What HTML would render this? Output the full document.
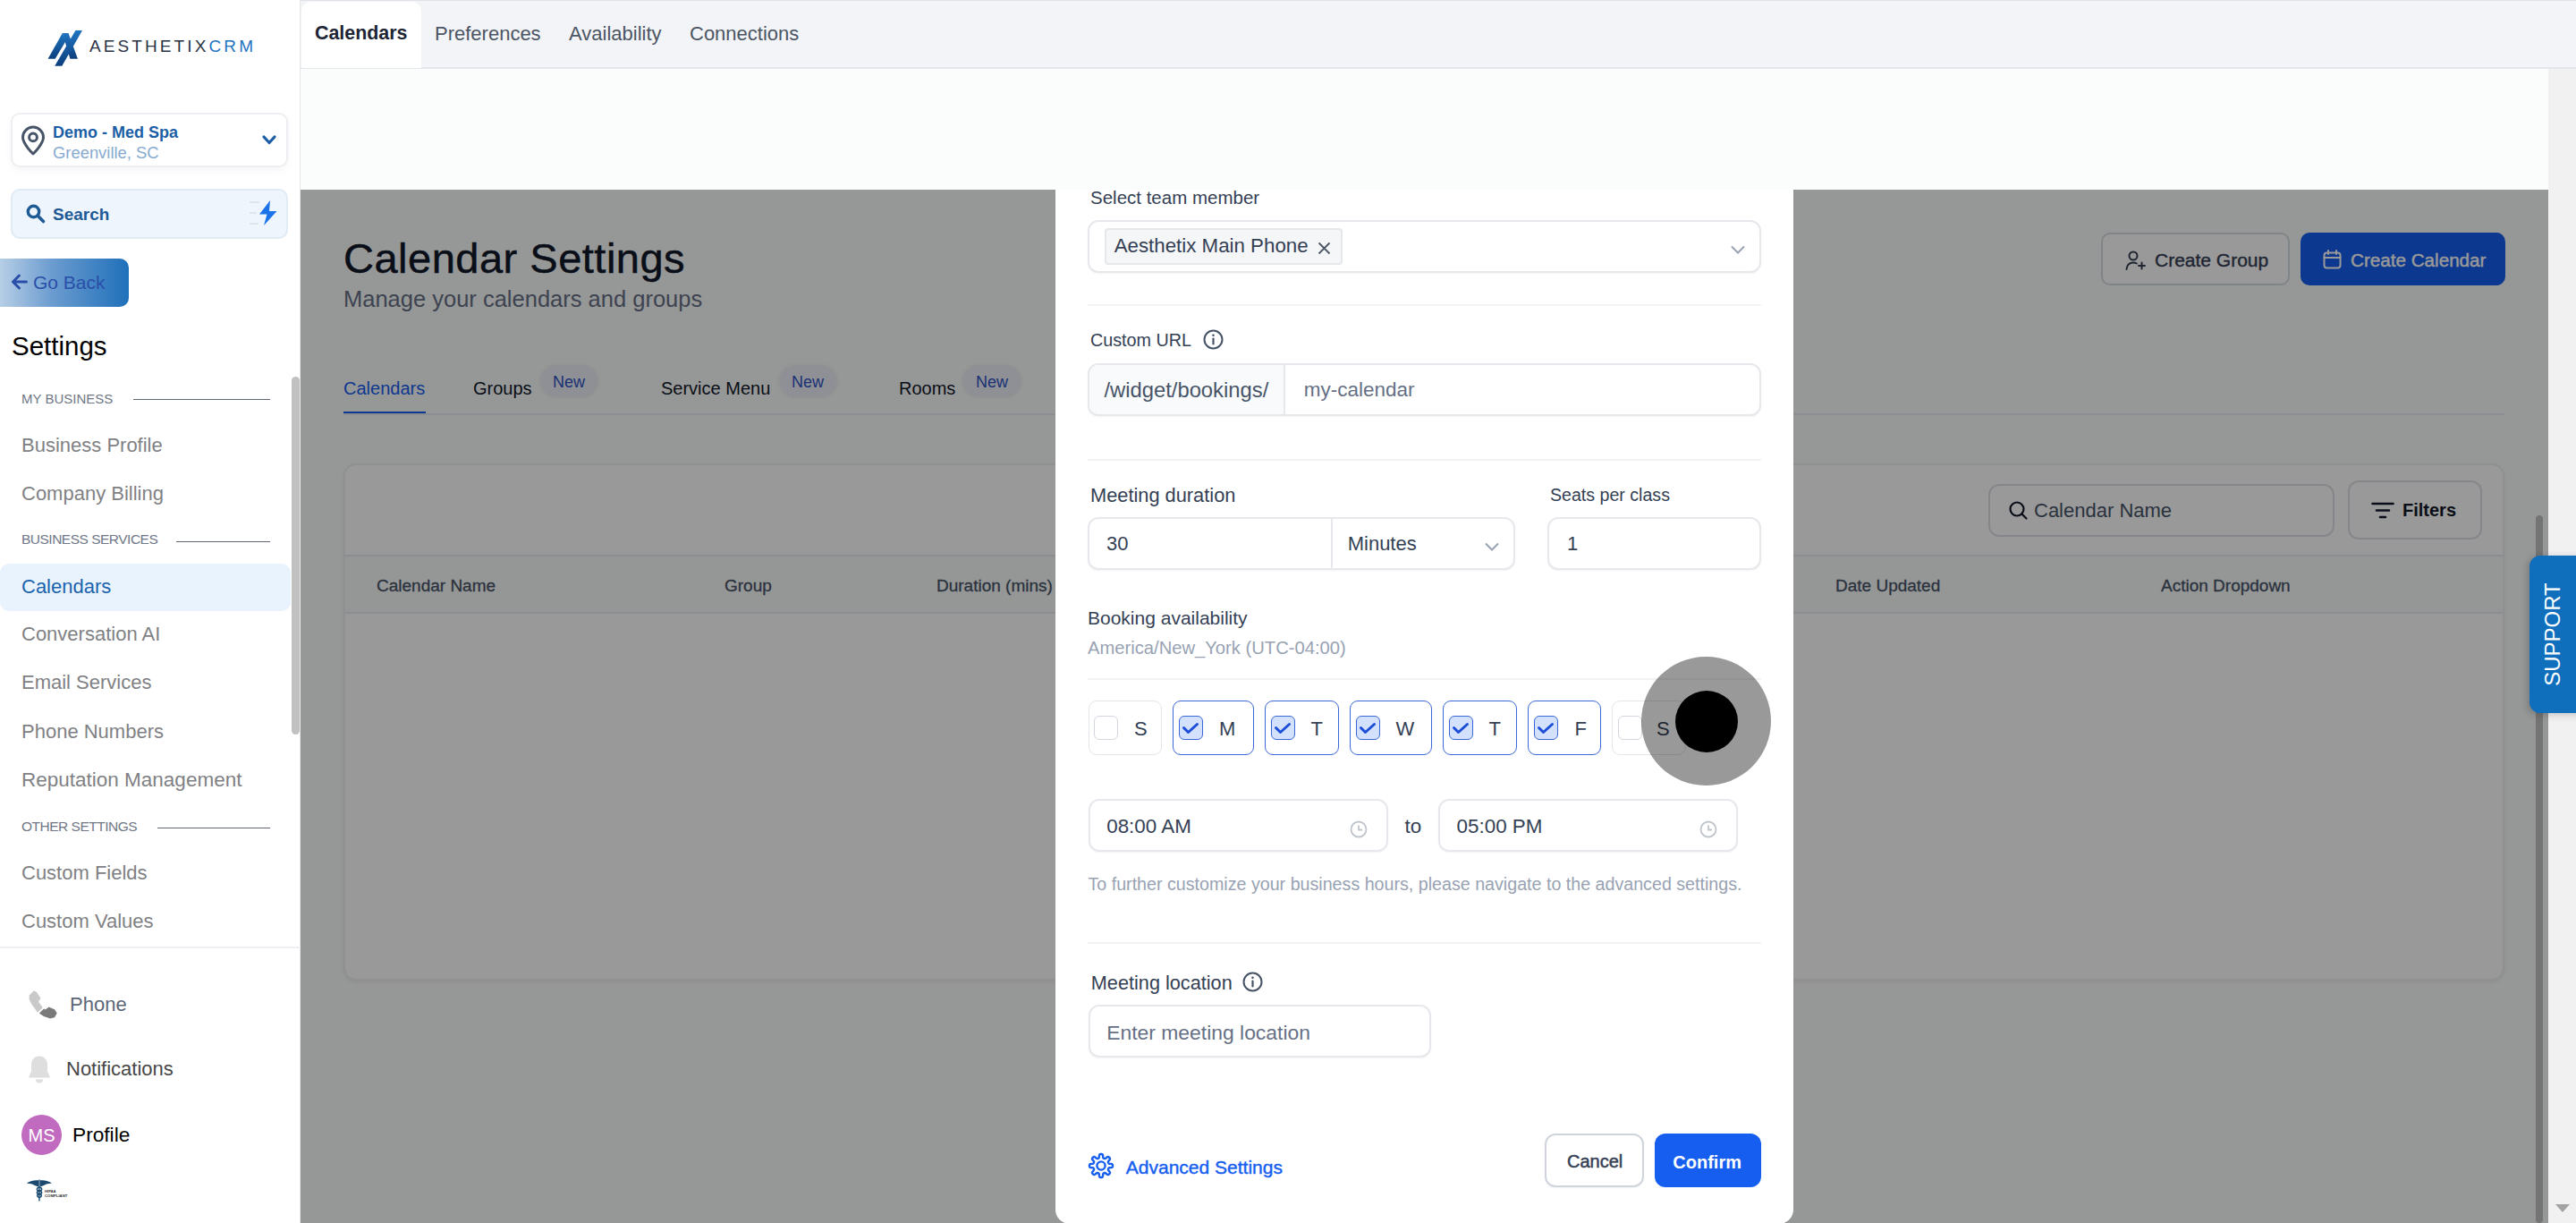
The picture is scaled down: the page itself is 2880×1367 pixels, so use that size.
<!DOCTYPE html>
<html><head><meta charset="utf-8">
<style>
*{box-sizing:border-box;margin:0;padding:0}
html,body{width:2880px;height:1367px;overflow:hidden;background:#fbfcfc;font-family:"Liberation Sans",sans-serif}
.a{position:absolute}
.t{position:absolute;line-height:1;white-space:nowrap}
svg{position:absolute;overflow:visible}
</style></head><body>

<!-- ===== MAIN PAGE (under overlay) ===== -->
<div class="a" style="left:336px;top:77px;width:2513px;height:1290px;background:#fbfcfc"></div>

<!-- page title -->
<div class="t" style="left:384px;top:264.8px;font-size:47px;letter-spacing:0.5px;color:#101828;-webkit-text-stroke:0.5px #101828">Calendar Settings</div>
<div class="t" style="left:384px;top:322px;font-size:25.5px;color:#667085">Manage your calendars and groups</div>

<!-- buttons -->
<div class="a" style="left:2349px;top:260px;width:211px;height:59px;border:2px solid #d8dce2;border-radius:10px;background:#fff"></div>
<svg style="left:2376px;top:280px" width="24" height="22" viewBox="0 0 24 22"><circle cx="9" cy="6" r="4.5" fill="none" stroke="#344054" stroke-width="2"/><path d="M1.5 21c0-4.5 3.3-7.5 7.5-7.5 1.5 0 2.8.4 3.8 1" fill="none" stroke="#344054" stroke-width="2" stroke-linecap="round"/><path d="M18.5 13.5v7M15 17h7" stroke="#344054" stroke-width="2" stroke-linecap="round"/></svg>
<div class="t" style="left:2409px;top:279.5px;font-size:21px;color:#344054;-webkit-text-stroke:0.4px #344054">Create Group</div>

<div class="a" style="left:2572px;top:260px;width:229px;height:59px;border-radius:10px;background:#155eef"></div>
<svg style="left:2597px;top:279px" width="22" height="22" viewBox="0 0 22 22"><rect x="1.5" y="3.5" width="18" height="17" rx="3" fill="none" stroke="#fff" stroke-width="2"/><path d="M1.5 9h18M6 1v4M15 1v4" stroke="#fff" stroke-width="2" stroke-linecap="round"/></svg>
<div class="t" style="left:2628px;top:280.5px;font-size:20.65px;color:#fff;-webkit-text-stroke:0.4px #fff">Create Calendar</div>

<!-- tabs -->
<div class="t" style="left:384px;top:423.5px;font-size:20px;color:#155eef">Calendars</div>
<div class="a" style="left:384px;top:460px;width:92px;height:4px;background:#155eef"></div>
<div class="a" style="left:384px;top:462px;width:2416px;height:2px;background:#eaecf0"></div>
<div class="t" style="left:529px;top:423.5px;font-size:20px;color:#101828">Groups</div>
<div class="a" style="left:605px;top:409px;width:63px;height:34px;border-radius:17px;background:#eef1f8;box-shadow:0 0 5px rgba(16,24,40,0.10)"></div>
<div class="t" style="left:618px;top:418px;font-size:18px;color:#2d52c4">New</div>
<div class="t" style="left:739px;top:423.5px;font-size:20px;color:#101828">Service Menu</div>
<div class="a" style="left:872px;top:409px;width:63px;height:34px;border-radius:17px;background:#eef1f8;box-shadow:0 0 5px rgba(16,24,40,0.10)"></div>
<div class="t" style="left:885px;top:418px;font-size:18px;color:#2d52c4">New</div>
<div class="t" style="left:1005px;top:423.5px;font-size:20px;color:#101828">Rooms</div>
<div class="a" style="left:1077px;top:409px;width:64px;height:34px;border-radius:17px;background:#eef1f8;box-shadow:0 0 5px rgba(16,24,40,0.10)"></div>
<div class="t" style="left:1091px;top:418px;font-size:18px;color:#2d52c4">New</div>

<!-- card -->
<div class="a" style="left:384px;top:518px;width:2416px;height:578px;border:2px solid #eef0f3;border-radius:14px;background:#fff;box-shadow:0 2px 4px rgba(16,24,40,0.06)"></div>
<div class="a" style="left:386px;top:620px;width:2412px;height:66px;background:#f9fafb;border-top:2px solid #eaecf0;border-bottom:2px solid #eaecf0"></div>
<div class="t" style="left:421px;top:644.5px;font-size:19px;color:#475467;-webkit-text-stroke:0.3px #475467">Calendar Name</div>
<div class="t" style="left:810px;top:644.5px;font-size:19px;color:#475467;-webkit-text-stroke:0.3px #475467">Group</div>
<div class="t" style="left:1047px;top:644.5px;font-size:19px;color:#475467;-webkit-text-stroke:0.3px #475467">Duration (mins)</div>
<div class="t" style="left:2052px;top:644.5px;font-size:19px;color:#475467;-webkit-text-stroke:0.3px #475467">Date Updated</div>
<div class="t" style="left:2416px;top:644.5px;font-size:19px;color:#475467;-webkit-text-stroke:0.3px #475467">Action Dropdown</div>

<div class="a" style="left:2223px;top:541px;width:387px;height:59px;border:2px solid #dde0e5;border-radius:12px;background:#fff"></div>
<svg style="left:2246px;top:560px" width="21" height="21" viewBox="0 0 21 21"><circle cx="9" cy="9" r="7.5" fill="none" stroke="#101828" stroke-width="2.2"/><path d="M14.5 14.5L19.5 19.5" stroke="#101828" stroke-width="2.2" stroke-linecap="round"/></svg>
<div class="t" style="left:2274px;top:559.8px;font-size:22px;color:#475467">Calendar Name</div>

<div class="a" style="left:2625px;top:537px;width:150px;height:66px;border:2px solid #dde0e5;border-radius:12px;background:#fff"></div>
<svg style="left:2651px;top:561px" width="26" height="19" viewBox="0 0 26 19"><path d="M1.5 2h23M6 9.5h14M10 17h6" stroke="#101828" stroke-width="2.6" stroke-linecap="round"/></svg>
<div class="t" style="left:2686px;top:559.5px;font-size:20px;font-weight:bold;color:#101828">Filters</div>

<!-- inner scrollbar -->
<div class="a" style="left:2835px;top:576px;width:8px;height:791px;border-radius:4px;background:#c1c1c1"></div>

<!-- OVERLAY -->
<div class="a" style="left:336px;top:212px;width:2513px;height:1155px;background:rgba(0,0,0,0.4)"></div>

<!-- ===== TOP NAV ===== -->
<div class="a" style="left:336px;top:0;width:2544px;height:77px;background:#f3f4f8;border-top:1px solid #dfe1e6;border-bottom:2px solid #e4e6eb"></div>
<div class="a" style="left:337px;top:2px;width:134px;height:74px;background:#fff;border-radius:10px 10px 0 0"></div>
<div class="t" style="left:352px;top:27.3px;font-size:21.4px;font-weight:bold;color:#1d2433">Calendars</div>
<div class="t" style="left:486px;top:27.3px;font-size:22px;color:#4b5563">Preferences</div>
<div class="t" style="left:636px;top:27.3px;font-size:22px;color:#4b5563">Availability</div>
<div class="t" style="left:771px;top:27.3px;font-size:22px;color:#4b5563">Connections</div>

<!-- page scrollbar track -->
<div class="a" style="left:2849px;top:77px;width:31px;height:1290px;background:#f1f1f1"></div>
<svg style="left:2857px;top:1346px" width="16" height="10" viewBox="0 0 16 10"><path d="M0 0h16L8 9z" fill="#a3a3a3"/></svg>

<!-- SUPPORT tab -->
<div class="a" style="left:2828px;top:621px;width:60px;height:176px;background:#0f6fbd;border-radius:12px 0 0 12px;box-shadow:-2px 2px 8px rgba(0,0,0,0.2)"></div>
<div class="t" style="left:2854px;top:709px;font-size:24px;color:#fff;transform:translate(-50%,-50%) rotate(-90deg);transform-origin:center">SUPPORT</div>

<!-- ===== SIDEBAR ===== -->
<div class="a" style="left:0;top:0;width:336px;height:1367px;background:#fff;border-right:1px solid #e5e7eb"></div>

<!-- logo -->
<svg style="left:50px;top:30px" width="46" height="48" viewBox="50 30 46 48">
<defs><linearGradient id="lg" x1="0" y1="0" x2="0" y2="1"><stop offset="0" stop-color="#1f74c0"/><stop offset="1" stop-color="#0c3f7e"/></linearGradient></defs>
<polygon points="53.6,65.7 61.7,65.7 73.5,46 69.8,37.1" fill="url(#lg)"/>
<polygon points="69.8,37.1 78.4,65.7 86.9,65.7 76.5,37.1" fill="url(#lg)"/>
<polygon points="61.2,73.7 69.3,73.7 92,34.1 84.4,34.1" fill="url(#lg)"/>
</svg>
<div class="t" style="left:100px;top:42px;font-size:19px;letter-spacing:3.1px;color:#2a3344">AESTHETIX<span style="color:#1f74c0">CRM</span></div>

<!-- location -->
<div class="a" style="left:12px;top:126px;width:310px;height:61px;border:2px solid #eceef1;border-radius:10px;background:#fff;box-shadow:0 4px 10px rgba(0,0,0,0.04)"></div>
<svg style="left:23px;top:140px" width="28" height="34" viewBox="0 0 28 34"><path d="M14 32C14 32 2.5 21 2.5 13.6A11.5 11.5 0 0 1 25.5 13.6C25.5 21 14 32 14 32Z" fill="none" stroke="#475467" stroke-width="3" stroke-linejoin="round"/><circle cx="14" cy="13.4" r="4.4" fill="none" stroke="#475467" stroke-width="3"/></svg>
<div class="t" style="left:59px;top:138.7px;font-size:18px;font-weight:bold;color:#1b5ea6">Demo - Med Spa</div>
<div class="t" style="left:59px;top:161.5px;font-size:18.4px;color:#86aad0">Greenville, SC</div>
<svg style="left:293px;top:151px" width="16" height="11" viewBox="0 0 16 11"><path d="M2 2L8 8.5 14 2" fill="none" stroke="#1b5ea6" stroke-width="3.2" stroke-linecap="round" stroke-linejoin="round"/></svg>

<!-- search -->
<div class="a" style="left:12px;top:211px;width:310px;height:56px;border:2px solid #e1ebf5;border-radius:10px;background:#eef5fc"></div>
<svg style="left:29px;top:228px" width="22" height="22" viewBox="0 0 22 22"><circle cx="8.5" cy="8.5" r="6.2" fill="none" stroke="#1e5a96" stroke-width="3.4"/><path d="M13.5 13.5L19.5 19.5" stroke="#1e5a96" stroke-width="3.6" stroke-linecap="round"/></svg>
<div class="t" style="left:59px;top:230px;font-size:19px;font-weight:bold;color:#1e5a96">Search</div>
<div class="a" style="left:279px;top:225px;width:11px;height:2px;background:#dde6ef"></div>
<div class="a" style="left:279px;top:237px;width:8px;height:2px;background:#dde6ef"></div>
<div class="a" style="left:279px;top:249px;width:10px;height:2px;background:#dde6ef"></div>
<svg style="left:289px;top:224px" width="22" height="28" viewBox="0 0 22 28"><path d="M13 0L1 15.5h8.5L6 28 20.5 12h-8.5z" fill="#1a73e8"/></svg>

<!-- go back -->
<div class="a" style="left:-10px;top:289px;width:154px;height:54px;border-radius:10px;background:linear-gradient(90deg,#c4d7ea 0%,#6a9bcf 45%,#1f70ba 100%)"></div>
<svg style="left:12px;top:306px" width="19" height="18" viewBox="0 0 19 18"><path d="M17.5 9H3M9.5 2L2.5 9l7 7" fill="none" stroke="#2a4fa8" stroke-width="3" stroke-linecap="round" stroke-linejoin="round"/></svg>
<div class="t" style="left:37px;top:305.2px;font-size:21px;color:#2a4fa8">Go Back</div>

<div class="t" style="left:13px;top:372px;font-size:29.5px;color:#000">Settings</div>

<!-- menu -->
<div class="t" style="left:24px;top:437.5px;font-size:15px;color:#6f7787">MY BUSINESS</div>
<div class="a" style="left:149px;top:446px;width:153px;height:1px;background:#5d6573"></div>
<div class="t" style="left:24px;top:486.6px;font-size:22px;color:#7f8184">Business Profile</div>
<div class="t" style="left:24px;top:540.8px;font-size:22px;color:#7f8184">Company Billing</div>
<div class="t" style="left:24px;top:595px;font-size:15.5px;letter-spacing:-0.5px;color:#6f7787">BUSINESS SERVICES</div>
<div class="a" style="left:197px;top:605px;width:105px;height:1px;background:#5d6573"></div>
<div class="a" style="left:0;top:630px;width:325px;height:53px;border-radius:10px;background:#e8f3fd"></div>
<div class="t" style="left:24px;top:644.5px;font-size:22px;color:#1b64ad">Calendars</div>
<div class="t" style="left:24px;top:698.4px;font-size:22px;color:#7f8184">Conversation AI</div>
<div class="t" style="left:24px;top:752.3px;font-size:22px;color:#7f8184">Email Services</div>
<div class="t" style="left:24px;top:806.8px;font-size:22px;color:#7f8184">Phone Numbers</div>
<div class="t" style="left:24px;top:861.1px;font-size:22.5px;color:#7f8184">Reputation Management</div>
<div class="t" style="left:24px;top:916px;font-size:15.5px;letter-spacing:-0.5px;color:#6f7787">OTHER SETTINGS</div>
<div class="a" style="left:176px;top:925px;width:126px;height:1px;background:#5d6573"></div>
<div class="t" style="left:24px;top:965.4px;font-size:22px;color:#7f8184">Custom Fields</div>
<div class="t" style="left:24px;top:1019.3px;font-size:22px;color:#7f8184">Custom Values</div>
<div class="a" style="left:326px;top:421px;width:9px;height:400px;border-radius:5px;background:#c1c1c1"></div>
<div class="a" style="left:0;top:1058px;width:336px;height:2px;background:#eceef1"></div>

<!-- bottom sidebar -->
<svg style="left:28px;top:1102px" width="42" height="40" viewBox="28 1102 42 40"><path d="M37.8 1108.1 L33.2 1112.8 L33.2 1116.7 L35.5 1121.6 L42.1 1130.8 L47 1126.2 L42.4 1119.8 L44.7 1115.7 L40.4 1109.2Z" fill="#c9c9c9" stroke="#c9c9c9" stroke-width="1.2" stroke-linejoin="round"/><path d="M44.7 1132.4 L49.3 1128.2 L50.6 1129.2 L54.8 1126.2 L60.7 1128.8 L63 1132.4 L60.7 1136.7 L55.8 1137.8 L49.3 1135.4Z" fill="#7a7a7a" stroke="#7a7a7a" stroke-width="1.2" stroke-linejoin="round"/></svg>
<div class="t" style="left:78px;top:1111.5px;font-size:22px;color:#5c6677">Phone</div>
<svg style="left:31px;top:1179px" width="26" height="32" viewBox="0 0 26 32"><path d="M13 1.5c-5.5 0-9 4-9 9.5v8L1.5 23.5v2h23v-2L22 19v-8c0-5.5-3.5-9.5-9-9.5z" fill="#dedede"/><path d="M9 27.5a4 4 0 0 0 8 0z" fill="#dedede"/></svg>
<div class="t" style="left:74px;top:1183.9px;font-size:22px;color:#474747">Notifications</div>
<div class="a" style="left:24px;top:1246px;width:45px;height:45px;border-radius:50%;background:#c06bc0"></div>
<div class="t" style="left:46.5px;top:1268.5px;font-size:20px;color:#fff;transform:translate(-50%,-50%)">MS</div>
<div class="t" style="left:81px;top:1257px;font-size:22.7px;color:#000">Profile</div>
<svg style="left:26px;top:1310px" width="56" height="40" viewBox="26 1310 56 40"><path d="M29.9 1322.2 C33 1320.5 38 1318.6 43 1319.3 L43 1326.5 C40 1325.8 37.5 1324.5 36 1323.6 C34 1323 31.5 1322.8 29.9 1322.2Z" fill="#1b4a6e"/><path d="M57.9 1322.2 C54.8 1320.5 49.8 1318.6 44.8 1319.3 L44.8 1326.5 C47.8 1325.8 50.3 1324.5 51.8 1323.6 C53.8 1323 56.3 1322.8 57.9 1322.2Z" fill="#1b4a6e"/><rect x="43.2" y="1318.5" width="1.5" height="24" fill="#2a5a80"/><path d="M44 1327 C40.5 1327.8 40.5 1330.6 44 1331 C47.5 1331.6 47.5 1334.2 44 1334.6 C40.8 1335.2 41 1337.6 44 1338.6" fill="none" stroke="#1b4a6e" stroke-width="1.5"/><path d="M44 1327 C47.5 1327.8 47.5 1330.6 44 1331 C40.5 1331.6 40.5 1334.2 44 1334.6 C47.2 1335.2 47 1337.6 44 1338.6" fill="none" stroke="#1b4a6e" stroke-width="1.5"/><text x="50" y="1333" font-family="Liberation Sans" font-weight="bold" font-size="3.8" fill="#333" textLength="12.6" lengthAdjust="spacingAndGlyphs">HIPAA</text><text x="50" y="1337.9" font-family="Liberation Sans" font-weight="bold" font-size="3.8" fill="#333" textLength="25.4" lengthAdjust="spacingAndGlyphs">COMPLIANT</text></svg>

<!-- ===== MODAL ===== -->
<div class="a" style="left:1180px;top:212px;width:825px;height:1156px;background:#fff;border-radius:0 0 16px 16px"></div>

<div class="t" style="left:1219px;top:211.4px;font-size:20.5px;color:#344054">Select team member</div>
<div class="a" style="left:1216px;top:245.5px;width:753px;height:59px;border:2px solid #e6e8ec;border-radius:12px;background:#fff;box-shadow:0 1px 2px rgba(16,24,40,0.05)"></div>
<div class="a" style="left:1234.5px;top:254.5px;width:266px;height:41px;border:2px solid #e6e8ec;border-radius:4px;background:#f5f6f8"></div>
<div class="t" style="left:1245.7px;top:263.9px;font-size:22.3px;color:#344054">Aesthetix Main Phone</div>
<svg style="left:1473px;top:270px" width="15" height="15" viewBox="0 0 15 15"><path d="M1.5 1.5l12 12M13.5 1.5l-12 12" stroke="#4d5766" stroke-width="1.8"/></svg>
<svg style="left:1935px;top:274px" width="16" height="10" viewBox="0 0 16 10"><path d="M1 1.5l7 7 7-7" fill="none" stroke="#98a2b3" stroke-width="2"/></svg>
<div class="a" style="left:1216px;top:340px;width:753px;height:2px;background:#f0f2f4"></div>

<div class="t" style="left:1219px;top:371px;font-size:19.75px;color:#344054">Custom URL</div>
<svg style="left:1345px;top:368px" width="23" height="23" viewBox="0 0 23 23"><circle cx="11.5" cy="11.5" r="10" fill="none" stroke="#475467" stroke-width="2"/><path d="M11.5 10.5v6" stroke="#475467" stroke-width="2.2" stroke-linecap="round"/><circle cx="11.5" cy="6.8" r="1.3" fill="#475467"/></svg>
<div class="a" style="left:1216px;top:405.5px;width:753px;height:59px;border:2px solid #e6e8ec;border-radius:12px;background:#fff;overflow:hidden;box-shadow:0 1px 2px rgba(16,24,40,0.05)"><div class="a" style="left:0;top:0;width:219px;height:55px;background:#f9fafb;border-right:2px solid #e6e8ec"></div></div>
<div class="t" style="left:1234.4px;top:424px;font-size:23.8px;color:#475467">/widget/bookings/</div>
<div class="t" style="left:1457.7px;top:425px;font-size:22.5px;color:#667085">my-calendar</div>
<div class="a" style="left:1216px;top:512.5px;width:753px;height:2px;background:#f0f2f4"></div>

<div class="t" style="left:1219px;top:542.5px;font-size:21.8px;color:#344054">Meeting duration</div>
<div class="t" style="left:1733px;top:543.5px;font-size:19.6px;color:#344054">Seats per class</div>
<div class="a" style="left:1216px;top:577.5px;width:478px;height:59px;border:2px solid #e6e8ec;border-radius:12px;background:#fff;box-shadow:0 1px 2px rgba(16,24,40,0.05)"></div>
<div class="a" style="left:1487.5px;top:579px;width:2px;height:56px;background:#e6e8ec"></div>
<div class="t" style="left:1237px;top:597.3px;font-size:22px;color:#344054">30</div>
<div class="t" style="left:1506.7px;top:596.7px;font-size:22px;color:#344054">Minutes</div>
<svg style="left:1660px;top:606px" width="16" height="10" viewBox="0 0 16 10"><path d="M1 1.5l7 7 7-7" fill="none" stroke="#98a2b3" stroke-width="2"/></svg>
<div class="a" style="left:1730px;top:577.5px;width:239px;height:59px;border:2px solid #e6e8ec;border-radius:12px;background:#fff;box-shadow:0 1px 2px rgba(16,24,40,0.05)"></div>
<div class="t" style="left:1752px;top:597.3px;font-size:22px;color:#344054">1</div>

<div class="t" style="left:1216px;top:680px;font-size:21px;color:#344054">Booking availability</div>
<div class="t" style="left:1216px;top:714px;font-size:20.2px;color:#98a2b3">America/New_York (UTC-04:00)</div>
<div class="a" style="left:1216px;top:758px;width:753px;height:2px;background:#f0f2f4"></div>

<!-- days -->
<div class="a" style="left:1216.5px;top:783.3px;width:82px;height:61px;border:1.5px solid #e3e6ea;border-radius:9px"></div>
<div class="a" style="left:1223.3px;top:800.4px;width:26.5px;height:27px;border:1.5px solid #d3d7dd;border-radius:6px"></div>
<div class="t" style="left:1268px;top:804px;font-size:22px;color:#344054">S</div>

<div class="a" style="left:1311px;top:783.3px;width:91px;height:61px;border:1.6px solid #3a68d8;border-radius:9px"></div>
<div class="a" style="left:1318px;top:800.4px;width:27px;height:27px;border:1.6px solid #3a68d8;border-radius:6px;background:#d3e1fc"></div>
<svg style="left:1318px;top:800.4px" width="27" height="27" viewBox="0 0 27 27"><path d="M5.5 13.5l5 5 10-9" fill="none" stroke="#1d4ed8" stroke-width="3" stroke-linecap="round" stroke-linejoin="round"/></svg>
<div class="t" style="left:1363px;top:804px;font-size:22px;color:#344054">M</div>

<div class="a" style="left:1414px;top:783.3px;width:83px;height:61px;border:1.6px solid #3a68d8;border-radius:9px"></div>
<div class="a" style="left:1421px;top:800.4px;width:27px;height:27px;border:1.6px solid #3a68d8;border-radius:6px;background:#d3e1fc"></div>
<svg style="left:1421px;top:800.4px" width="27" height="27" viewBox="0 0 27 27"><path d="M5.5 13.5l5 5 10-9" fill="none" stroke="#1d4ed8" stroke-width="3" stroke-linecap="round" stroke-linejoin="round"/></svg>
<div class="t" style="left:1465.5px;top:804px;font-size:22px;color:#344054">T</div>

<div class="a" style="left:1509px;top:783.3px;width:91.5px;height:61px;border:1.6px solid #3a68d8;border-radius:9px"></div>
<div class="a" style="left:1516px;top:800.4px;width:27px;height:27px;border:1.6px solid #3a68d8;border-radius:6px;background:#d3e1fc"></div>
<svg style="left:1516px;top:800.4px" width="27" height="27" viewBox="0 0 27 27"><path d="M5.5 13.5l5 5 10-9" fill="none" stroke="#1d4ed8" stroke-width="3" stroke-linecap="round" stroke-linejoin="round"/></svg>
<div class="t" style="left:1560.5px;top:804px;font-size:22px;color:#344054">W</div>

<div class="a" style="left:1613px;top:783.3px;width:83px;height:61px;border:1.6px solid #3a68d8;border-radius:9px"></div>
<div class="a" style="left:1620px;top:800.4px;width:27px;height:27px;border:1.6px solid #3a68d8;border-radius:6px;background:#d3e1fc"></div>
<svg style="left:1620px;top:800.4px" width="27" height="27" viewBox="0 0 27 27"><path d="M5.5 13.5l5 5 10-9" fill="none" stroke="#1d4ed8" stroke-width="3" stroke-linecap="round" stroke-linejoin="round"/></svg>
<div class="t" style="left:1664.5px;top:804px;font-size:22px;color:#344054">T</div>

<div class="a" style="left:1708px;top:783.3px;width:81.5px;height:61px;border:1.6px solid #3a68d8;border-radius:9px"></div>
<div class="a" style="left:1715px;top:800.4px;width:27px;height:27px;border:1.6px solid #3a68d8;border-radius:6px;background:#d3e1fc"></div>
<svg style="left:1715px;top:800.4px" width="27" height="27" viewBox="0 0 27 27"><path d="M5.5 13.5l5 5 10-9" fill="none" stroke="#1d4ed8" stroke-width="3" stroke-linecap="round" stroke-linejoin="round"/></svg>
<div class="t" style="left:1760.5px;top:804px;font-size:22px;color:#344054">F</div>

<div class="a" style="left:1802px;top:783.3px;width:82.5px;height:61px;border:1.5px solid #e3e6ea;border-radius:9px"></div>
<div class="a" style="left:1809px;top:800.4px;width:26.5px;height:27px;border:1.5px solid #d3d7dd;border-radius:6px"></div>
<div class="t" style="left:1852px;top:804px;font-size:22px;color:#344054">S</div>

<!-- times -->
<div class="a" style="left:1216.5px;top:893px;width:335px;height:59px;border:2px solid #e6e8ec;border-radius:12px;background:#fff;box-shadow:0 1px 2px rgba(16,24,40,0.05)"></div>
<div class="t" style="left:1237.2px;top:912.8px;font-size:22.4px;color:#344054">08:00 AM</div>
<svg style="left:1509px;top:917px" width="20" height="20" viewBox="0 0 20 20"><circle cx="10" cy="10" r="8.5" fill="none" stroke="#c0c5cc" stroke-width="1.8"/><path d="M10 5.5V10.5H14" fill="none" stroke="#c0c5cc" stroke-width="1.8"/></svg>
<div class="t" style="left:1570.5px;top:912.8px;font-size:22.4px;color:#344054">to</div>
<div class="a" style="left:1607.5px;top:893px;width:335px;height:59px;border:2px solid #e6e8ec;border-radius:12px;background:#fff;box-shadow:0 1px 2px rgba(16,24,40,0.05)"></div>
<div class="t" style="left:1628.6px;top:912.8px;font-size:22.4px;color:#344054">05:00 PM</div>
<svg style="left:1900px;top:917px" width="20" height="20" viewBox="0 0 20 20"><circle cx="10" cy="10" r="8.5" fill="none" stroke="#c0c5cc" stroke-width="1.8"/><path d="M10 5.5V10.5H14" fill="none" stroke="#c0c5cc" stroke-width="1.8"/></svg>
<div class="t" style="left:1216.5px;top:978.5px;font-size:19.67px;color:#98a2b3">To further customize your business hours, please navigate to the advanced settings.</div>
<div class="a" style="left:1216px;top:1052.5px;width:753px;height:2px;background:#f0f2f4"></div>

<div class="t" style="left:1219.8px;top:1088px;font-size:21.7px;color:#344054">Meeting location</div>
<svg style="left:1388.5px;top:1086px" width="23" height="23" viewBox="0 0 23 23"><circle cx="11.5" cy="11.5" r="10" fill="none" stroke="#475467" stroke-width="2"/><path d="M11.5 10.5v6" stroke="#475467" stroke-width="2.2" stroke-linecap="round"/><circle cx="11.5" cy="6.8" r="1.3" fill="#475467"/></svg>
<div class="a" style="left:1216.5px;top:1123.3px;width:383px;height:59px;border:2px solid #e6e8ec;border-radius:12px;background:#fff;box-shadow:0 1px 2px rgba(16,24,40,0.05)"></div>
<div class="t" style="left:1237.2px;top:1143px;font-size:22.9px;color:#667085">Enter meeting location</div>

<!-- footer -->
<svg style="left:1216px;top:1289px" width="30" height="28" viewBox="0 0 30 28"><path d="M15.00 1.00 L15.34 1.01 L15.68 1.04 L16.01 1.11 L16.34 1.23 L16.65 1.49 L16.90 1.98 L17.08 2.80 L17.17 3.81 L17.25 4.64 L17.38 5.14 L17.55 5.41 L17.74 5.57 L17.95 5.68 L18.16 5.78 L18.37 5.87 L18.58 5.96 L18.80 6.04 L19.03 6.10 L19.28 6.12 L19.59 6.05 L20.03 5.79 L20.67 5.27 L21.45 4.62 L22.16 4.15 L22.68 3.99 L23.08 4.02 L23.40 4.17 L23.68 4.36 L23.95 4.57 L24.19 4.81 L24.43 5.05 L24.64 5.32 L24.83 5.60 L24.98 5.92 L25.01 6.32 L24.85 6.84 L24.38 7.55 L23.73 8.33 L23.21 8.97 L22.95 9.41 L22.88 9.72 L22.90 9.97 L22.96 10.20 L23.04 10.42 L23.13 10.63 L23.22 10.84 L23.32 11.05 L23.43 11.26 L23.59 11.45 L23.86 11.62 L24.36 11.75 L25.19 11.83 L26.20 11.92 L27.02 12.10 L27.51 12.35 L27.77 12.66 L27.89 12.99 L27.96 13.32 L27.99 13.66 L28.00 14.00 L27.99 14.34 L27.96 14.68 L27.89 15.01 L27.77 15.34 L27.51 15.65 L27.02 15.90 L26.20 16.08 L25.19 16.17 L24.36 16.25 L23.86 16.38 L23.59 16.55 L23.43 16.74 L23.32 16.95 L23.22 17.16 L23.13 17.37 L23.04 17.58 L22.96 17.80 L22.90 18.03 L22.88 18.28 L22.95 18.59 L23.21 19.03 L23.73 19.67 L24.38 20.45 L24.85 21.16 L25.01 21.68 L24.98 22.08 L24.83 22.40 L24.64 22.68 L24.43 22.95 L24.19 23.19 L23.95 23.43 L23.68 23.64 L23.40 23.83 L23.08 23.98 L22.68 24.01 L22.16 23.85 L21.45 23.38 L20.67 22.73 L20.03 22.21 L19.59 21.95 L19.28 21.88 L19.03 21.90 L18.80 21.96 L18.58 22.04 L18.37 22.13 L18.16 22.22 L17.95 22.32 L17.74 22.43 L17.55 22.59 L17.38 22.86 L17.25 23.36 L17.17 24.19 L17.08 25.20 L16.90 26.02 L16.65 26.51 L16.34 26.77 L16.01 26.89 L15.68 26.96 L15.34 26.99 L15.00 27.00 L14.66 26.99 L14.32 26.96 L13.99 26.89 L13.66 26.77 L13.35 26.51 L13.10 26.02 L12.92 25.20 L12.83 24.19 L12.75 23.36 L12.62 22.86 L12.45 22.59 L12.26 22.43 L12.05 22.32 L11.84 22.22 L11.63 22.13 L11.42 22.04 L11.20 21.96 L10.97 21.90 L10.72 21.88 L10.41 21.95 L9.97 22.21 L9.33 22.73 L8.55 23.38 L7.84 23.85 L7.32 24.01 L6.92 23.98 L6.60 23.83 L6.32 23.64 L6.05 23.43 L5.81 23.19 L5.57 22.95 L5.36 22.68 L5.17 22.40 L5.02 22.08 L4.99 21.68 L5.15 21.16 L5.62 20.45 L6.27 19.67 L6.79 19.03 L7.05 18.59 L7.12 18.28 L7.10 18.03 L7.04 17.80 L6.96 17.58 L6.87 17.37 L6.78 17.16 L6.68 16.95 L6.57 16.74 L6.41 16.55 L6.14 16.38 L5.64 16.25 L4.81 16.17 L3.80 16.08 L2.98 15.90 L2.49 15.65 L2.23 15.34 L2.11 15.01 L2.04 14.68 L2.01 14.34 L2.00 14.00 L2.01 13.66 L2.04 13.32 L2.11 12.99 L2.23 12.66 L2.49 12.35 L2.98 12.10 L3.80 11.92 L4.81 11.83 L5.64 11.75 L6.14 11.62 L6.41 11.45 L6.57 11.26 L6.68 11.05 L6.78 10.84 L6.87 10.63 L6.96 10.42 L7.04 10.20 L7.10 9.97 L7.12 9.72 L7.05 9.41 L6.79 8.97 L6.27 8.33 L5.62 7.55 L5.15 6.84 L4.99 6.32 L5.02 5.92 L5.17 5.60 L5.36 5.32 L5.57 5.05 L5.81 4.81 L6.05 4.57 L6.32 4.36 L6.60 4.17 L6.92 4.02 L7.32 3.99 L7.84 4.15 L8.55 4.62 L9.33 5.27 L9.97 5.79 L10.41 6.05 L10.72 6.12 L10.97 6.10 L11.20 6.04 L11.42 5.96 L11.63 5.87 L11.84 5.78 L12.05 5.68 L12.26 5.57 L12.45 5.41 L12.62 5.14 L12.75 4.64 L12.83 3.81 L12.92 2.80 L13.10 1.98 L13.35 1.49 L13.66 1.23 L13.99 1.11 L14.32 1.04 L14.66 1.01 L15.00 1.00Z" fill="none" stroke="#155eef" stroke-width="2.4" stroke-linejoin="round"/><circle cx="15" cy="14" r="4.6" fill="none" stroke="#155eef" stroke-width="2.4"/></svg>
<div class="t" style="left:1258.8px;top:1294.1px;font-size:21px;color:#155eef;-webkit-text-stroke:0.4px #155eef">Advanced Settings</div>
<div class="a" style="left:1727px;top:1267px;width:110.5px;height:59.5px;border:2px solid #d0d5dd;border-radius:12px;background:#fff;box-shadow:0 1px 2px rgba(16,24,40,0.05)"></div>
<div class="t" style="left:1752px;top:1287.7px;font-size:20px;color:#344054;-webkit-text-stroke:0.5px #344054">Cancel</div>
<div class="a" style="left:1850px;top:1267px;width:119px;height:59.5px;border-radius:12px;background:#155eef"></div>
<div class="t" style="left:1870.3px;top:1288.7px;font-size:20px;font-weight:bold;color:#fff">Confirm</div>

<!-- click indicator -->
<div class="a" style="left:1835.2px;top:733.8px;width:144.5px;height:144.5px;border-radius:50%;background:rgba(0,0,0,0.40)"></div>
<div class="a" style="left:1873px;top:772px;width:70px;height:69px;border-radius:50%;background:#000"></div>


</body></html>
